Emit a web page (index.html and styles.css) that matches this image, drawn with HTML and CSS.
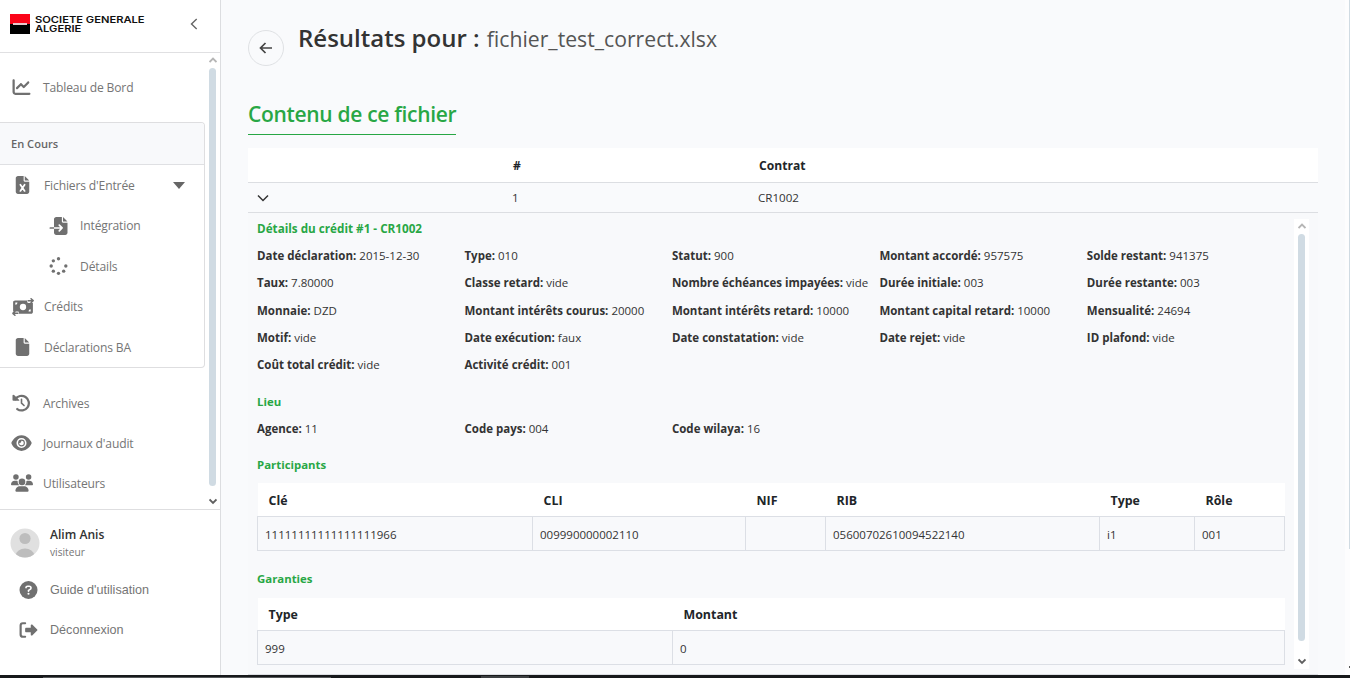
FILE: index.html
```html
<!DOCTYPE html>
<html lang="fr">
<head>
<meta charset="utf-8">
<title>Résultats</title>
<link rel="stylesheet" href="styles.css">
</head>
<body>
<svg class="sprite" aria-hidden="true">
  <symbol id="i-chart" viewBox="0 0 512 512"><path d="M64 64c0-17.700-14.300-32-32-32S0 46.300 0 64V400c0 44.200 35.800 80 80 80H480c17.700 0 32-14.300 32-32s-14.300-32-32-32H80c-8.800 0-16-7.200-16-16V64zm406.600 86.600c12.500-12.500 12.500-32.800 0-45.300s-32.800-12.500-45.300 0L320 210.700l-57.400-57.400c-12.500-12.500-32.800-12.500-45.300 0l-112 112c-12.500 12.500-12.500 32.800 0 45.300s32.800 12.500 45.300 0L240 221.300l57.400 57.400c12.500 12.500 32.800 12.500 45.300 0l128-128z"/></symbol>
  <symbol id="i-file" viewBox="0 0 384 512"><path d="M0 64C0 28.700 28.700 0 64 0H224V128c0 17.700 14.300 32 32 32H384V448c0 35.300-28.700 64-64 64H64c-35.300 0-64-28.700-64-64V64zm384 64H256V0L384 128z"/></symbol>
  <symbol id="i-excel" viewBox="0 0 384 512"><path d="M0 64C0 28.700 28.700 0 64 0H224V128c0 17.700 14.300 32 32 32H384V448c0 35.300-28.700 64-64 64H64c-35.300 0-64-28.700-64-64V64zm384 64H256V0L384 128z"/><path d="M132 248L252 424M252 248L132 424" stroke="#fff" stroke-width="50" stroke-linecap="round"/></symbol>
  <symbol id="i-import" viewBox="0 0 512 512"><path d="M128 64c0-35.300 28.700-64 64-64H352V128c0 17.700 14.300 32 32 32H512V448c0 35.300-28.700 64-64 64H192c-35.300 0-64-28.700-64-64V64zm384 64H384V0L512 128z"/><path d="M128 312H350M278 232l80 80-80 80" fill="none" stroke="#fff" stroke-width="48" stroke-linecap="round" stroke-linejoin="round"/><path d="M24 288H128V336H24a24 24 0 0 1 0-48z"/></symbol>
  <symbol id="i-spinner" viewBox="0 0 512 512"><circle cx="256" cy="48" r="48"/><circle cx="256" cy="464" r="48"/><circle cx="48" cy="256" r="48"/><circle cx="464" cy="256" r="48"/><circle cx="109" cy="109" r="48"/><circle cx="109" cy="403" r="48"/><circle cx="403" cy="403" r="48"/></symbol>
  <symbol id="i-money" viewBox="0 0 640 512"><path d="M96 64H440V112a30 30 0 0 0 30 24H608V400c0 28-24 52-52 52H200V420a30 30 0 0 0-30-36H32V116c0-28 20-52 64-52z"/><circle cx="320" cy="256" r="92" fill="#fff"/><path d="M96 128h64a64 64 0 0 1-64 64zM544 384h-64a64 64 0 0 1 64-64z" fill="#fff"/><path d="M470 72H615M555 16l60 56-60 56M170 440H25M85 384l-60 56 60 56" fill="none" stroke="currentColor" stroke-width="44" stroke-linecap="round" stroke-linejoin="round"/></symbol>
  <symbol id="i-history" viewBox="0 0 512 512"><path d="M80 150A208 208 0 1 1 135 428" fill="none" stroke="currentColor" stroke-width="64" stroke-linecap="round"/><path d="M24 22c14 0 24 8 30 16L190 168c8 10 4 24-10 24H24c-13 0-24-11-24-24V46c0-13 11-24 24-24z"/><path d="M256 152V260L328 328" fill="none" stroke="currentColor" stroke-width="46" stroke-linecap="round" stroke-linejoin="round"/></symbol>
  <symbol id="i-eye" viewBox="0 0 576 512"><path d="M288 32c-80.800 0-145.500 36.800-192.600 80.600C48.600 156 17.300 208 2.500 243.700c-3.300 7.900-3.300 16.700 0 24.600C17.300 304 48.600 356 95.400 399.400C142.500 443.200 207.200 480 288 480s145.500-36.800 192.600-80.600c46.800-43.500 78.100-95.400 93-131.100c3.300-7.900 3.300-16.700 0-24.600c-14.900-35.700-46.200-87.700-93-131.100C433.500 68.800 368.800 32 288 32z"/><circle cx="288" cy="256" r="120" fill="none" stroke="#fff" stroke-width="46"/><path d="M286 190a66 66 0 1 1-64 64q64 8 64-64z" fill="#fff"/></symbol>
  <symbol id="i-users" viewBox="0 0 640 512"><circle cx="144" cy="80" r="80"/><circle cx="512" cy="80" r="80"/><path d="M0 299c0-59 48-107 107-107h43c16 0 31 4 44 10a128 128 0 0 0 42 118H21c-12 0-21-9-21-21zM405 320a128 128 0 0 0 42-118c14-6 29-10 44-10h43c59 0 106 48 106 107 0 12-9 21-21 21z"/><circle cx="320" cy="224" r="96"/><path d="M128 485c0-73 60-133 133-133h118c73 0 133 60 133 133 0 15-12 27-27 27H155c-15 0-27-12-27-27z"/></symbol>
  <symbol id="i-help" viewBox="0 0 512 512"><circle cx="256" cy="256" r="256"/><path d="M184 190c2-26 22-42 48-42h42c32 0 54 24 54 52 0 40-40 46-72 68v20" fill="none" stroke="#fff" stroke-width="46" stroke-linecap="round"/><circle cx="256" cy="364" r="30" fill="#fff"/></symbol>
  <symbol id="i-logout" viewBox="0 0 512 512"><path d="M160 64H96a64 64 0 0 0-64 64V384a64 64 0 0 0 64 64H160" fill="none" stroke="currentColor" stroke-width="62" stroke-linecap="round"/><path d="M504 273L361 409c-16 14-41 4-41-18V320H192c-18 0-32-14-32-32V224c0-18 14-32 32-32H320V121c0-22 26-32 41-18L504 239c10 10 10 24 0 34z"/></symbol>
  <symbol id="i-up" viewBox="0 0 8 7"><path d="M.5 5L4 1.500 7.500 5" fill="none" stroke="currentColor" stroke-width="1.900"/></symbol>
  <symbol id="i-down" viewBox="0 0 8 7"><path d="M.5 1.500L4 5 7.500 1.500" fill="none" stroke="currentColor" stroke-width="1.900"/></symbol>
</svg>
<div class="app">
  <aside class="sidebar">
    <header class="brand">
      <div class="logo"><i></i></div>
      <div class="brand-name"><span>SOCIETE GENERALE</span><span>ALGERIE</span></div>
      <svg class="collapse" viewBox="0 0 8 12"><path d="M6.700 1L1.500 6l5.200 5" fill="none" stroke="currentColor" stroke-width="1.400"/></svg>
    </header>
    <div class="nav-wrap">
      <nav class="nav">
        <a class="item first"><svg class="ic"><use href="#i-chart"/></svg>Tableau de Bord</a>
        <section class="group">
          <h6>En Cours</h6>
          <a class="item sub"><svg class="ic"><use href="#i-excel"/></svg><span class="label">Fichiers d'Entrée</span><b class="caret"></b></a>
          <a class="item child"><svg class="ic"><use href="#i-import"/></svg>Intégration</a>
          <a class="item child"><svg class="ic"><use href="#i-spinner"/></svg>Détails</a>
          <a class="item sub"><svg class="ic wide"><use href="#i-money"/></svg>Crédits</a>
          <a class="item sub"><svg class="ic"><use href="#i-file"/></svg>Déclarations BA</a>
        </section>
        <a class="item"><svg class="ic"><use href="#i-history"/></svg>Archives</a>
        <a class="item"><svg class="ic"><use href="#i-eye"/></svg>Journaux d'audit</a>
        <a class="item"><svg class="ic wide"><use href="#i-users"/></svg>Utilisateurs</a>
      </nav>
      <div class="scroll nav-scroll"><svg class="up"><use href="#i-up"/></svg><i></i><svg class="down"><use href="#i-down"/></svg></div>
    </div>
    <footer class="account">
      <div class="user">
        <svg class="avatar" viewBox="0 0 30 30"><clipPath id="round"><circle cx="15" cy="15" r="14.500"/></clipPath><g clip-path="url(#round)"><rect width="30" height="30" fill="#e0e0e0"/><circle cx="15" cy="10.500" r="5.600" fill="#bdbdbd"/><ellipse cx="15" cy="27" rx="9" ry="6.500" fill="#bdbdbd"/></g></svg>
        <div><strong>Alim Anis</strong><span>visiteur</span></div>
      </div>
      <a class="link"><svg class="ic"><use href="#i-help"/></svg>Guide d'utilisation</a>
      <a class="link"><svg class="ic"><use href="#i-logout"/></svg>Déconnexion</a>
    </footer>
  </aside>
  <main class="main">
    <header class="title">
      <button class="back"><svg viewBox="0 0 14 12"><path d="M13 6H2M6.500 1L1.500 6l5 5" fill="none" stroke="currentColor" stroke-width="1.700"/></svg></button>
      <h1>Résultats pour : <small>fichier_test_correct.xlsx</small></h1>
    </header>
    <h2><span>Contenu de ce fichier</span></h2>
    <div class="list">
      <div class="row head"><span></span><span>#</span><span>Contrat</span></div>
      <div class="row"><span><svg class="chev" viewBox="0 0 12 8"><path d="M1 1.500l5 5 5-5" fill="none" stroke="currentColor" stroke-width="1.500"/></svg></span><span>1</span><span>CR1002</span></div>
      <div class="panel">
        <div class="detail">
          <h3 class="lead">Détails du crédit #1 - CR1002</h3>
          <div class="grid">
            <p><b>Date déclaration:</b> 2015-12-30</p><p><b>Type:</b> 010</p><p><b>Statut:</b> 900</p><p><b>Montant accordé:</b> 957575</p><p><b>Solde restant:</b> 941375</p>
            <p><b>Taux:</b> 7.80000</p><p><b>Classe retard:</b> vide</p><p><b>Nombre échéances impayées:</b> vide</p><p><b>Durée initiale:</b> 003</p><p><b>Durée restante:</b> 003</p>
            <p><b>Monnaie:</b> DZD</p><p><b>Montant intérêts courus:</b> 20000</p><p><b>Montant intérêts retard:</b> 10000</p><p><b>Montant capital retard:</b> 10000</p><p><b>Mensualité:</b> 24694</p>
            <p><b>Motif:</b> vide</p><p><b>Date exécution:</b> faux</p><p><b>Date constatation:</b> vide</p><p><b>Date rejet:</b> vide</p><p><b>ID plafond:</b> vide</p>
            <p><b>Coût total crédit:</b> vide</p><p><b>Activité crédit:</b> 001</p>
          </div>
          <h3>Lieu</h3>
          <div class="grid"><p><b>Agence:</b> 11</p><p><b>Code pays:</b> 004</p><p><b>Code wilaya:</b> 16</p></div>
          <h3>Participants</h3>
          <table>
            <colgroup><col class="c-key"><col class="c-cli"><col class="c-nif"><col class="c-rib"><col class="c-type"><col></colgroup>
            <thead><tr><th>Clé</th><th>CLI</th><th>NIF</th><th>RIB</th><th>Type</th><th>Rôle</th></tr></thead>
            <tbody><tr><td>11111111111111111966</td><td>009990000002110</td><td></td><td>05600702610094522140</td><td>i1</td><td>001</td></tr></tbody>
          </table>
          <h3>Garanties</h3>
          <table class="guarantees">
            <colgroup><col class="c-kind"><col></colgroup>
            <thead><tr><th>Type</th><th>Montant</th></tr></thead>
            <tbody><tr><td>999</td><td>0</td></tr></tbody>
          </table>
        </div>
        <div class="scroll panel-scroll"><svg class="up"><use href="#i-up"/></svg><i></i><svg class="down"><use href="#i-down"/></svg></div>
      </div>
    </div>
  </main>
  <div class="page-scroll"><i></i><b></b></div>
</div>
<div class="taskbar"><i></i><b></b></div>
</body>
</html>
```
FILE: styles.css
```css
* { box-sizing: border-box; margin: 0; padding: 0; }
body { width: 1350px; height: 678px; overflow: hidden; font-family: "Open Sans", "Noto Sans", sans-serif; color: #333; background: #f9fafc; }
.sprite { position: absolute; width: 0; height: 0; }
.app { display: flex; height: 675px; }

.sidebar { width: 221px; height: 675px; display: flex; flex-direction: column; background: #fff; border-right: 1px solid #dcdde0; }
.brand { height: 53px; display: flex; align-items: flex-start; border-bottom: 1px solid #e0e0e2; padding: 14px 0 0 10px; }
.logo { width: 20px; height: 20px; background: linear-gradient(#fb0418 50%, #000 50%); padding: 9px 3px; }
.logo i { display: block; height: 2px; background: #e9c9cc; }
.brand-name { width: 148px; margin-left: 5px; font: 600 9.300px/9px Inter, sans-serif; color: #111; padding-top: 1px; }
.brand-name span { display: block; width: max-content; transform: scaleX(1.200); transform-origin: 0 0; }
.collapse { width: 8px; height: 12px; margin: 4px 0 0 7px; color: #666; }

.nav-wrap { height: 456px; display: flex; justify-content: space-between; }
.nav { width: 205px; padding-top: 14px; }
.item { height: 40px; display: flex; align-items: center; padding-left: 11px; gap: 11px; font-size: 12.100px; letter-spacing: -.15px; color: #757575; }
.ic { width: 21px; height: 18px; color: #707070; fill: currentColor; flex: none; }
.ic.wide { width: 22px; margin-right: -1px; }
.first { margin-bottom: 15px; }
.group { border: 1px solid #dedee0; border-left: 0; border-radius: 0 4px 4px 0; height: 246px; margin-bottom: 15px; overflow: hidden; }
.group h6 { height: 42px; border-bottom: 1px solid #dfe0e3; background: #f8f9fb; padding-left: 11px; font-size: 11.100px; line-height: 42px; font-weight: 600; color: #666; }
.group .item { height: 40.500px; }
.group .sub { gap: 11px; padding-left: 12px; }
.group .wide { margin: 0; }
.group .sub .wide { margin-right: -1px; }
.group .child { padding-left: 48px; }
.label { width: 118px; }
.label + .caret { border: 6px solid transparent; border-top: 7px solid #666; border-bottom: 0; }

.scroll { color: #5f5f5f; display: flex; flex-direction: column; align-items: center; }
.scroll svg { width: 8px; height: 7px; }
.scroll .up { color: #b5b5b5; }
.scroll i { background: #d0dbe3; border-radius: 4px; width: 7px; }
.nav-scroll { width: 15px; padding-top: 4px; }
.nav-scroll i { height: 418px; margin: 4px 0 12px; }

.account { border-top: 1px solid #dedee0; padding-top: 12px; flex: 1; }
.user { display: flex; align-items: center; gap: 10px; padding-left: 10px; height: 42px; }
.avatar { width: 30px; height: 30px; }
.user strong { display: block; font-size: 12.100px; line-height: 18px; font-weight: 600; color: #333; }
.user span { display: block; font-size: 10.200px; line-height: 16px; color: #757575; }
.link { display: flex; align-items: center; height: 40px; padding-left: 18px; gap: 11px; font: 12.600px "Liberation Sans", sans-serif; color: #757575; }
.user + .link { margin-top: 5.500px; }

.main { width: 1124px; padding: 19px 0 0 27px; }
.title { display: flex; height: 80px; }
.back { width: 36px; height: 36px; margin: 11px 14px 0 0; border: 1px solid #dfe1e4; border-radius: 50%; background: none; color: #444; display: grid; place-items: center; }
.back svg { width: 14px; height: 12px; }
h1 { font-size: 24px; line-height: 38px; font-weight: 600; color: #333; white-space: nowrap; }
h1 small { font-size: 21.200px; font-weight: 400; color: #555; margin-left: 1px; }
h2 { font-size: 21px; letter-spacing: -.31px; font-weight: 600; color: #28a745; height: 49px; display: flex; }
h2 span { height: 36px; line-height: 31px; border-bottom: 1px solid #28a745; white-space: nowrap; }

.list { width: 1070px; }
.row { display: grid; grid-template-columns: 258px 246px 1fr; align-items: center; height: 30px; border-bottom: 1px solid #dcdee2; font-size: 11.600px; color: #333; }
.row span { padding-left: 6px; }
.row span:first-child { padding-left: 9px; }
.row.head { height: 35px; background: #fff; font-size: 12.100px; font-weight: 700; color: #212529; }
.row.head span { padding-left: 7px; }
.chev { width: 12px; height: 8px; display: block; }
.panel { display: flex; height: 462px; background: #f8f9fb; border-bottom: 1px solid #dcdee2; padding: 6px 9px 5px; justify-content: space-between; }
.detail { width: 1028px; padding-top: 1px; }
.detail h3 { font-size: 11.400px; line-height: 18px; font-weight: 700; color: #28a745; margin-bottom: 9px; }
.detail .lead { font-size: 11.700px; line-height: 17px; margin-bottom: 10px; }
.grid { display: grid; grid-template-columns: repeat(5, 1fr); gap: 9.300px; margin-bottom: 18px; }
.lead + .grid { margin-bottom: 19px; }
.grid p { font-size: 11.500px; line-height: 18px; white-space: nowrap; }
table { width: 1028px; table-layout: fixed; border-collapse: collapse; margin-bottom: 19px; }
.guarantees { margin-top: 10px; }
th { background: #fff; height: 33px; text-align: left; padding: 3px 0 0 11px; font-size: 12.400px; line-height: 18px; color: #212529; }
td { border: 1px solid #dcdfe5; height: 34px; padding: 3px 0 0 7px; font-size: 11.500px; line-height: 18px; }
.c-key { width: 275px; } .c-cli { width: 213px; } .c-nif { width: 80px; } .c-rib { width: 274px; } .c-type { width: 95px; } .c-kind { width: 415px; }
.panel-scroll { width: 15px; background: #fff; padding-top: 4px; }
.panel-scroll i { height: 407px; margin: 4px 0 17px; }
.page-scroll { width: 5px; background: #fdfdfe; display: flex; flex-direction: column; align-items: flex-end; }
.page-scroll i { width: 1px; height: 549px; background: #d0dbe3; }
.page-scroll b { width: 1px; height: 2px; margin-top: 117px; background: #555; }
.taskbar { height: 3px; background: #17191b; display: flex; align-items: flex-end; padding-left: 43px; }
.taskbar i { width: 288px; height: 1px; background: #55585a; }
.taskbar b { width: 48px; height: 2px; margin-left: 150px; background: #3c3f41; }
```
